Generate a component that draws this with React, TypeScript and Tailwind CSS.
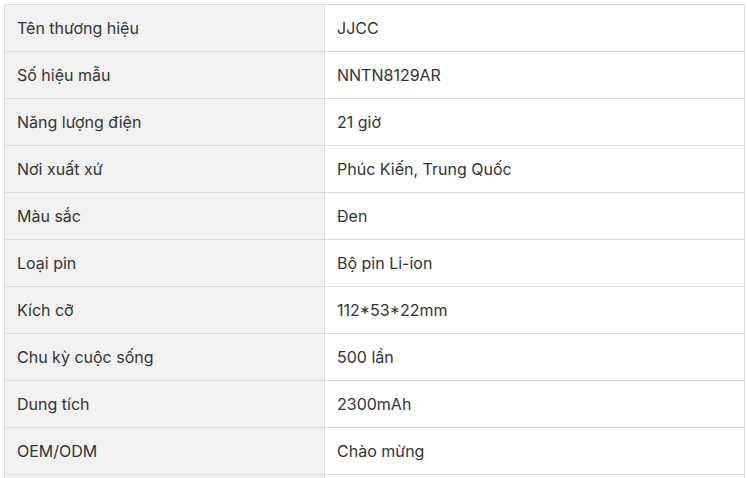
const specs = [
  { label: 'Tên thương hiệu', value: 'JJCC' },
  { label: 'Số hiệu mẫu', value: 'NNTN8129AR' },
  { label: 'Năng lượng điện', value: '21 giờ' },
  { label: 'Nơi xuất xứ', value: 'Phúc Kiến, Trung Quốc' },
  { label: 'Màu sắc', value: 'Đen' },
  { label: 'Loại pin', value: 'Bộ pin Li-ion' },
  { label: 'Kích cỡ', value: '112*53*22mm' },
  { label: 'Chu kỳ cuộc sống', value: '500 lần' },
  { label: 'Dung tích', value: '2300mAh' },
  { label: 'OEM/ODM', value: 'Chào mừng' },
]

function SpecTable() {
  return (
    <div className="ml-1 mt-1 w-[741px] border-l border-t border-[#dddddd]">
      {specs.map((row) => (
        <div key={row.label} className="flex">
          <div className="w-[320px] shrink-0 border-r border-b border-[#dddddd] bg-[#f2f2f2] px-3 py-3 leading-[22px]">
            {row.label}
          </div>
          <div className="flex-1 border-r border-b border-[#dddddd] bg-white px-3 py-3 leading-[22px]">
            {row.value}
          </div>
        </div>
      ))}
      {/* next row, cut off by the window */}
      <div className="flex h-[46px]">
        <div className="w-[320px] shrink-0 border-r border-[#dddddd] bg-[#f2f2f2]" />
        <div className="flex-1 border-r border-[#dddddd] bg-white" />
      </div>
    </div>
  )
}

export default function App() {
  return (
    <div className="h-[478px] overflow-hidden bg-white text-[16px] text-[#333333] font-['Inter',sans-serif]">
      <SpecTable />
    </div>
  )
}
